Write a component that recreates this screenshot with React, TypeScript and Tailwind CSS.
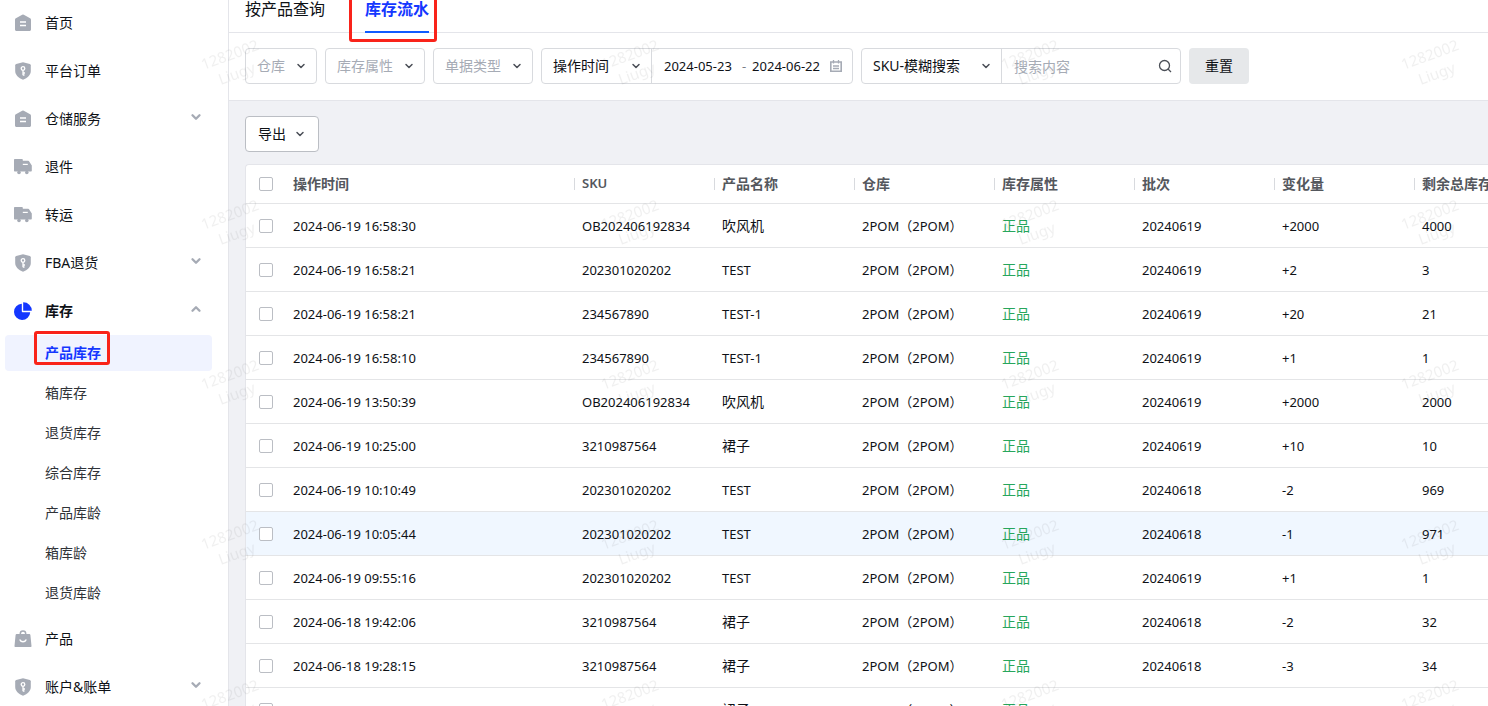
import type { ReactNode } from 'react'
import clsx from 'clsx'
import { ChevronDown, ChevronUp } from 'lucide-react'

type IconName = 'home' | 'shield' | 'truck' | 'pie' | 'bag'

interface MenuItem {
  label: string
  icon: IconName
  expandable?: boolean
  open?: boolean
  children?: string[]
}

const menu: MenuItem[] = [
  { label: '首页', icon: 'home' },
  { label: '平台订单', icon: 'shield' },
  { label: '仓储服务', icon: 'home', expandable: true },
  { label: '退件', icon: 'truck' },
  { label: '转运', icon: 'truck' },
  { label: 'FBA退货', icon: 'shield', expandable: true },
  {
    label: '库存',
    icon: 'pie',
    expandable: true,
    open: true,
    children: ['产品库存', '箱库存', '退货库存', '综合库存', '产品库龄', '箱库龄', '退货库龄'],
  },
  { label: '产品', icon: 'bag' },
  { label: '账户&账单', icon: 'shield', expandable: true },
]

const columns = ['SKU', '产品名称', '仓库', '库存属性', '批次', '变化量', '剩余总库存']

const rows = [
  ['2024-06-19 16:58:30', 'OB202406192834', '吹风机', '20240619', '+2000', '4000'],
  ['2024-06-19 16:58:21', '202301020202', 'TEST', '20240619', '+2', '3'],
  ['2024-06-19 16:58:21', '234567890', 'TEST-1', '20240619', '+20', '21'],
  ['2024-06-19 16:58:10', '234567890', 'TEST-1', '20240619', '+1', '1'],
  ['2024-06-19 13:50:39', 'OB202406192834', '吹风机', '20240619', '+2000', '2000'],
  ['2024-06-19 10:25:00', '3210987564', '裙子', '20240619', '+10', '10'],
  ['2024-06-19 10:10:49', '202301020202', 'TEST', '20240618', '-2', '969'],
  ['2024-06-19 10:05:44', '202301020202', 'TEST', '20240618', '-1', '971'],
  ['2024-06-19 09:55:16', '202301020202', 'TEST', '20240619', '+1', '1'],
  ['2024-06-18 19:42:06', '3210987564', '裙子', '20240618', '-2', '32'],
  ['2024-06-18 19:28:15', '3210987564', '裙子', '20240618', '-3', '34'],
  ['2024-06-18 17:45:30', '3210987564', '裙子', '20240618', '-2', '37'],
]

const activeRow = 7

function MenuIcon({ name }: { name: IconName }) {
  return (
    <svg
      viewBox="0 0 18 18"
      className={clsx('h-[18px] w-[18px] shrink-0', name === 'pie' ? 'text-[#1437ff]' : 'text-[#a6abb5]')}
      fill="currentColor"
      aria-hidden="true"
    >
      {name === 'home' && (
        <>
          <path d="M8.200.8a1.600 1.600 0 0 1 1.600 0l6.300 3.500c.5.300.9.800.9 1.400v9.800c0 .8-.7 1.500-1.500 1.500h-13C1.700 17 1 16.300 1 15.500V5.700c0-.6.3-1.100.9-1.400z" />
          <path d="M6 7.300h6v1.500H6zM6 10.800h6v1.500H6z" fill="#fff" />
        </>
      )}
      {name === 'shield' && (
        <>
          <path d="M9 .2 15.800 2c.6.200 1 .7 1 1.300V9c0 4-3.300 7-7.800 8.800C4.500 16 1.200 13 1.200 9V3.300c0-.6.4-1.100 1-1.300z" />
          <circle cx="9" cy="6.500" r="1.800" fill="none" stroke="#fff" strokeWidth="1.300" />
          <path d="M9 8.300v5M9 11h2M9 13h1.500" fill="none" stroke="#fff" strokeWidth="1.300" />
        </>
      )}
      {name === 'truck' && (
        <>
          <path d="M1 1h6.800c.6 0 1 .4 1 1v.8h5.400c.4 0 .8.200 1 .6L17.500 7c.2.200.3.500.3.800v4.700c0 .6-.4 1-1 1H1c-.6 0-1-.4-1-1V2c0-.6.4-1 1-1z" />
          <path d="M8.800 5.800h5v1.200h-5z" fill="#fff" />
          <circle cx="5" cy="14.500" r="1.800" />
          <circle cx="12.800" cy="14.500" r="1.800" />
        </>
      )}
      {name === 'pie' && (
        <>
          <path d="M7.800 1.800v7.400c0 .6.4 1 1 1h7.400A8.100 8.100 0 1 1 7.800 1.800z" />
          <path d="M9.200.2A8.500 8.500 0 0 1 17.800 8.800H9.200z" />
        </>
      )}
      {name === 'bag' && (
        <>
          <path d="M6.300 5V3.800a2.700 2.700 0 0 1 5.400 0V5" fill="none" stroke="currentColor" strokeWidth="1.500" />
          <path d="M2.600 4h12.800c.5 0 .9.400 1 .9L17.500 16c.1.600-.4 1-1 1h-15c-.6 0-1.100-.4-1-1L1.600 4.900c.1-.5.5-.9 1-.9z" />
          <path d="M5.700 9.500c1.200 3 5.400 3 6.600 0" fill="none" stroke="#fff" strokeWidth="1.400" />
        </>
      )}
    </svg>
  )
}

function Sidebar() {
  return (
    <aside className="w-[229px] shrink-0 overflow-hidden border-r border-[#e4e5ea] bg-white">
      <nav className="-mt-px">
        <ul>
          {menu.map((item) => (
            <li key={item.label}>
              <a href="#" className={clsx('flex h-12 items-center pr-[25px] pl-3.5', item.open && 'font-bold')}>
                <MenuIcon name={item.icon} />
                <span className="ml-[13px] flex-1">{item.label}</span>
                {item.expandable &&
                  (item.open ? (
                    <ChevronUp className="mb-1 h-3.5 w-3.5 text-[#a6abb5]" strokeWidth={4} />
                  ) : (
                    <ChevronDown className="mb-1 h-3.5 w-3.5 text-[#a6abb5]" strokeWidth={4} />
                  ))}
              </a>
              {item.children && (
                <ul>
                  {item.children.map((child, i) => (
                    <li key={child} className="h-10 pr-4 pl-[5px]">
                      <a
                        href="#"
                        className={clsx(
                          'relative flex h-9 items-center rounded pl-10',
                          i === 0 ? 'bg-[#f0f3ff] font-bold text-[#1437ff]' : 'text-[#303338]',
                        )}
                      >
                        {child}
                        {i === 0 && (
                          <span className="absolute -top-1 left-[29px] h-[34px] w-[76px] rounded-[3px] border-3 border-[#f9231a]" />
                        )}
                      </a>
                    </li>
                  ))}
                </ul>
              )}
            </li>
          ))}
        </ul>
      </nav>
    </aside>
  )
}

function Tabs() {
  return (
    <div className="flex h-[33px] gap-10 border-b border-[#e4e5ea] bg-white px-4 text-base leading-[18px]">
      <a href="#">按产品查询</a>
      <a href="#" className="relative -mb-px border-b-2 border-[#0f5bff] font-bold text-[#1437ff]">
        库存流水
        <span className="absolute -top-5 -left-4 h-[62px] w-[88px] rounded-[3px] border-3 border-[#f9231a]" />
      </a>
    </div>
  )
}

function Select({ label, className, muted }: { label: string; className: string; muted?: boolean }) {
  return (
    <div className={clsx('relative h-full', className)}>
      <select
        aria-label={label}
        className={clsx('h-full w-full appearance-none pr-7 pl-[11px] outline-none', muted && 'text-[#a6abb5]')}
      >
        <option>{label}</option>
      </select>
      <ChevronDown className="pointer-events-none absolute top-[11px] right-[9px] h-3 w-3 text-[#4b4f57]" strokeWidth={3} />
    </div>
  )
}

function Field({ className, children }: { className?: string; children: ReactNode }) {
  return <div className={clsx('flex h-9 items-center rounded border border-[#d8dade]', className)}>{children}</div>
}

function Filters() {
  return (
    <form className="flex gap-2 border-b border-[#e4e5ea] bg-white px-4 pt-[15px] pb-4">
      <Field>
        <Select label="仓库" className="w-[70px]" muted />
      </Field>
      <Field>
        <Select label="库存属性" className="w-[98px]" muted />
      </Field>
      <Field>
        <Select label="单据类型" className="w-[98px]" muted />
      </Field>
      <Field className="w-[312px]">
        <Select label="操作时间" className="w-[110px] border-r border-[#d8dade]" />
        <div className="flex flex-1 items-center gap-1.5 pr-2.5 pl-3 text-[13px]">
          <input aria-label="开始日期" defaultValue="2024-05-23" className="w-0 min-w-0 flex-1 outline-none" />
          <span className="text-[#7b7f87]">-</span>
          <input aria-label="结束日期" defaultValue="2024-06-22" className="w-0 min-w-0 flex-1 outline-none" />
          <svg viewBox="0 0 12 12" className="h-3 w-3 shrink-0 text-[#a6abb5]" fill="none" stroke="currentColor" aria-hidden="true">
            <path d="M.8 2h10.400v9.200H.8z" strokeWidth="1.600" />
            <path d="M3.500 0v3.500M8.500 0v3.500M3 6h6M3 8.500h6" strokeWidth="1.300" />
          </svg>
        </div>
      </Field>
      <Field className="w-80">
        <Select label="SKU-模糊搜索" className="w-[140px] border-r border-[#d8dade]" />
        <input
          type="text"
          aria-label="搜索内容"
          placeholder="搜索内容"
          className="h-full min-w-0 flex-1 pl-3 outline-none placeholder:text-[#a6abb5]"
        />
        <button type="button" aria-label="搜索" className="mr-2 shrink-0">
          <svg viewBox="0 0 14 14" className="h-3.5 w-3.5 text-[#4b4f57]" fill="none" stroke="currentColor" strokeWidth="1.300">
            <circle cx="6.500" cy="6.500" r="5" />
            <path d="m10 10 3 3" />
          </svg>
        </button>
      </Field>
      <button type="button" className="h-9 w-[60px] rounded bg-[#e6e8ea]">
        重置
      </button>
    </form>
  )
}

function Checkbox({ label }: { label: string }) {
  return (
    <input
      type="checkbox"
      aria-label={label}
      className="block h-3.5 w-3.5 appearance-none rounded-xs border border-[#bbbec4] bg-white"
    />
  )
}

function FlowTable() {
  return (
    <div className="overflow-hidden rounded-tl border-t border-l border-[#e4e5ea] bg-white">
      <table className="w-full min-w-[1308px] table-fixed text-left">
        <colgroup>
          <col className="w-[39px]" />
          <col className="w-[289px]" />
          {columns.map((name) => (
            <col key={name} className="w-[140px]" />
          ))}
        </colgroup>
        <thead>
          <tr className="h-[38px] border-b border-[#e4e5e7] text-[#54575d]">
            <th className="pl-[13px]">
              <Checkbox label="全选" />
            </th>
            <th className="pl-2 font-bold">操作时间</th>
            {columns.map((name) => (
              <th key={name} className="font-bold whitespace-nowrap">
                <div className="flex items-center">
                  <span className="h-3 w-px bg-[#d8dade]" />
                  <span className={clsx('pl-[7px]', name === 'SKU' && 'text-[13px] font-semibold')}>{name}</span>
                </div>
              </th>
            ))}
          </tr>
        </thead>
        <tbody>
          {rows.map(([time, sku, product, batch, change, total], i) => (
            <tr
              key={i}
              className={clsx(
                'h-11 border-b border-[#e4e5e7] text-[13px] [&>td]:pt-0.5',
                i === activeRow && 'bg-[#f0f7ff]',
              )}
            >
              <td className="pl-[13px]">
                <Checkbox label={time} />
              </td>
              <td className="pl-2">{time}</td>
              <td className="pl-2">{sku}</td>
              <td className={clsx('pl-2', !product.startsWith('TEST') && 'text-sm')}>{product}</td>
              <td className="pl-2">2POM（2POM）</td>
              <td className="pl-2 text-sm text-[#27a65c]">正品</td>
              <td className="pl-2">{batch}</td>
              <td className="pl-2">{change}</td>
              <td className="pl-2">{total}</td>
            </tr>
          ))}
        </tbody>
      </table>
    </div>
  )
}

function Watermark() {
  return (
    <svg className="pointer-events-none absolute inset-0 h-full w-full" aria-hidden="true">
      <defs>
        <pattern id="watermark" x="30" y="-25" width="400" height="160" patternUnits="userSpaceOnUse">
          <g transform="translate(200 80) rotate(-20)" fill="#000" fillOpacity="0.06" fontSize="15" textAnchor="middle">
            <text y="5">1282002</text>
            <text y="25">Liugy</text>
          </g>
        </pattern>
      </defs>
      <rect width="100%" height="100%" fill="url(#watermark)" />
    </svg>
  )
}

export default function App() {
  return (
    <div className="relative flex h-screen overflow-hidden bg-[#f0f1f5] font-['Noto_Sans','Noto_Sans_CJK_SC',sans-serif] text-sm text-[#0e1116]">
      <Sidebar />
      <main className="min-w-0 flex-1">
        <Tabs />
        <Filters />
        <div className="pt-[15px] pl-4">
          <button type="button" className="mb-3 flex h-9 items-center gap-2 rounded border border-[#bbbec4] bg-white px-3">
            导出
            <ChevronDown className="h-3 w-3 text-[#4b4f57]" strokeWidth={3} />
          </button>
          <FlowTable />
        </div>
      </main>
      <Watermark />
    </div>
  )
}
